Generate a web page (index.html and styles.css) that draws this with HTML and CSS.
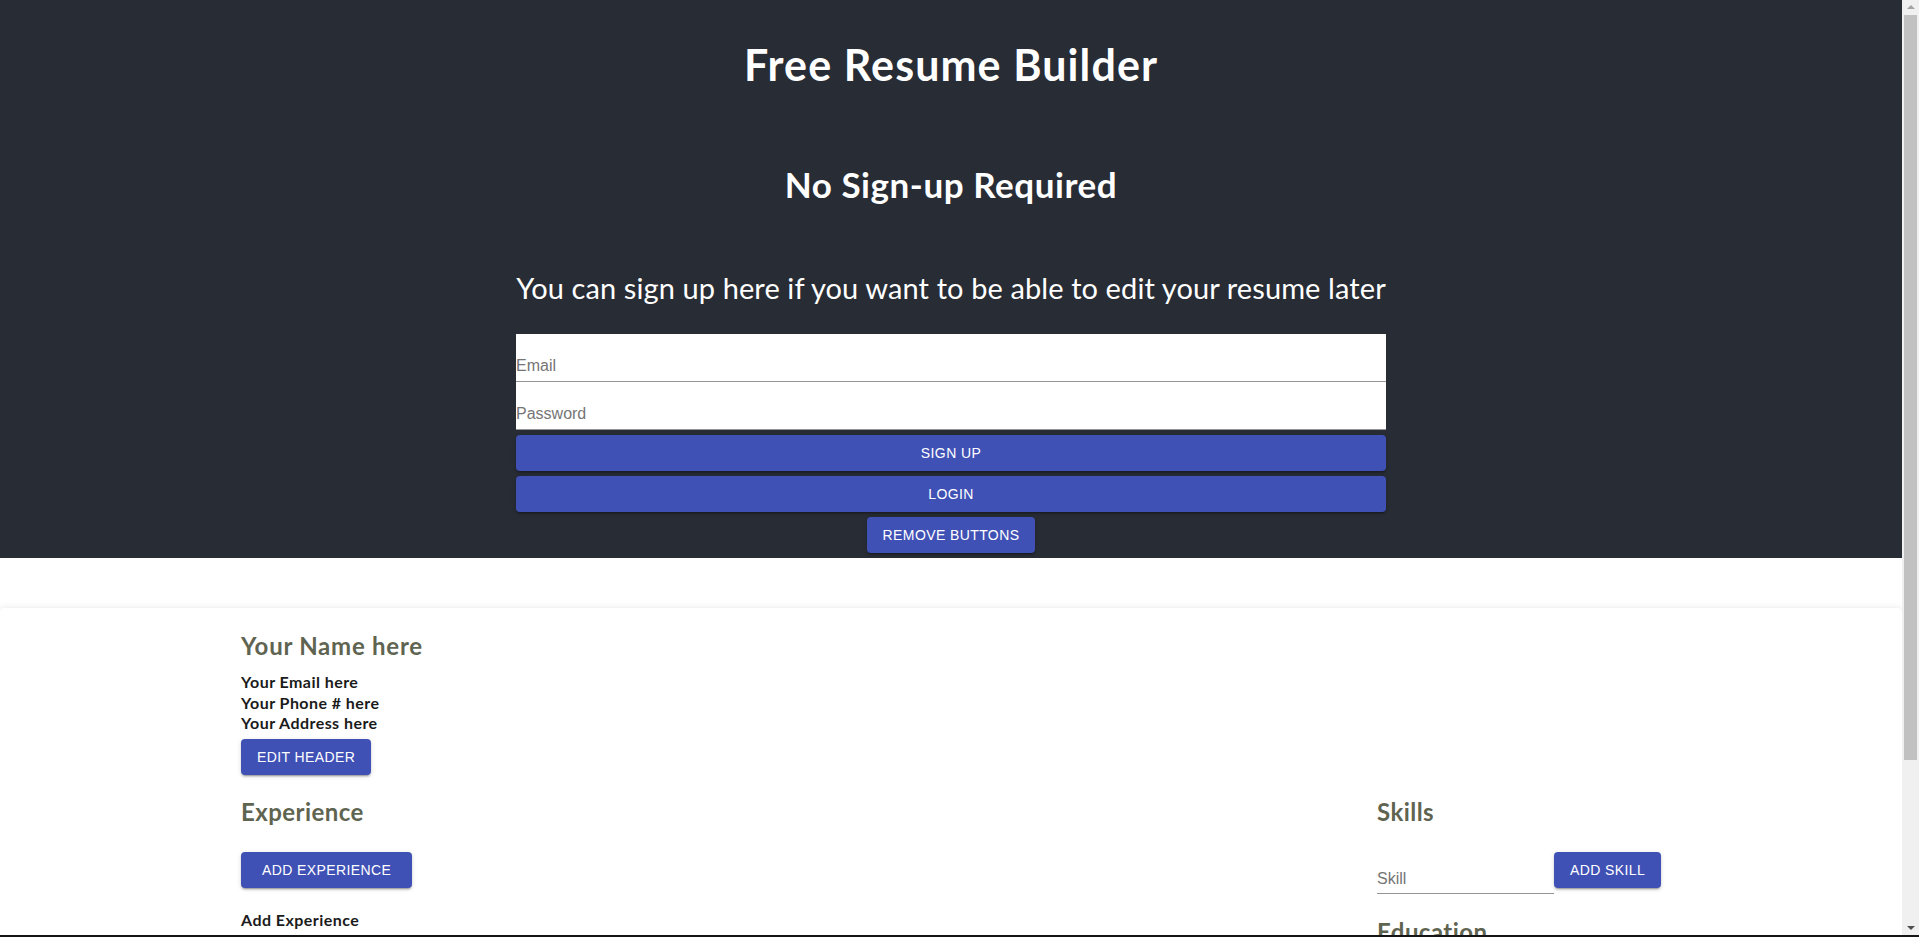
FILE: index.html
```html
<!DOCTYPE html>
<html lang="en">
<head>
<meta charset="utf-8">
<title>Free Resume Builder</title>
<link rel="stylesheet" href="styles.css">
</head>
<body>
<div class="app">
  <header class="hero">
    <h1 class="hero-title">Free Resume Builder</h1>
    <h2 class="hero-sub">No Sign-up Required</h2>
    <div class="auth">
      <p class="auth-lead">You can sign up here if you want to be able to edit your resume later</p>
      <input class="auth-input" type="email" placeholder="Email">
      <input class="auth-input" type="password" placeholder="Password">
      <button class="btn btn-block" type="button">Sign up</button>
      <button class="btn btn-block" type="button">Login</button>
      <button class="btn" type="button">Remove buttons</button>
    </div>
  </header>

  <main class="sheet">
    <div class="sheet-inner">
      <section class="resume-head">
        <h2 class="name">Your Name here</h2>
        <div class="info">
          <div>Your Email here</div>
          <div>Your Phone # here</div>
          <div>Your Address here</div>
        </div>
        <button class="btn btn-edit" type="button">Edit header</button>
      </section>

      <div class="cols">
        <div class="col-main">
          <h2 class="section-title">Experience</h2>
          <button class="btn btn-section btn-wide" type="button">Add experience</button>
          <div class="subhead">Add Experience</div>
          <div class="form-stack">
            <input class="line-input" placeholder="Company">
            <input class="line-input" placeholder="Title">
            <input class="line-input" placeholder="Start Date">
            <input class="line-input" placeholder="End Date">
            <input class="line-input" placeholder="Description">
          </div>
        </div>
        <aside class="col-side">
          <h2 class="section-title">Skills</h2>
          <div class="skill-row">
            <input class="line-input skill-input" placeholder="Skill">
            <button class="btn" type="button">Add skill</button>
          </div>
          <h2 class="section-title edu-title">Education</h2>
          <div class="form-stack">
            <input class="line-input" placeholder="School">
            <input class="line-input" placeholder="Degree">
            <input class="line-input" placeholder="Year">
          </div>
          <button class="btn btn-section" type="button">Add education</button>
        </aside>
      </div>
    </div>
  </main>
</div>

<div class="scrollbar" aria-hidden="true">
  <span class="scroll-arrow scroll-up"></span>
  <span class="scroll-thumb"></span>
  <span class="scroll-arrow scroll-down"></span>
</div>
<div class="screen-edge" aria-hidden="true"></div>
</body>
</html>
```

FILE: styles.css
```css
* {
  box-sizing: border-box;
}

body {
  margin: 0;
  font-family: Lato, "Open Sans", sans-serif;
  background: #fff;
}

.app {
  margin-right: 17px;
}

.hero {
  background: #282c34;
  color: #fff;
  text-align: center;
  padding: 39px 0 5px;
  display: flex;
  flex-direction: column;
  align-items: center;
}

.hero-title {
  margin: 0;
  font-size: 43px;
  line-height: 52px;
  font-weight: 700;
  letter-spacing: 1.1px;
}

.hero-sub {
  margin: 71px 0 0;
  font-size: 35px;
  line-height: 44px;
  font-weight: 700;
  letter-spacing: 0.55px;
}

.auth {
  width: 870px;
  margin-top: 63px;
  display: flex;
  flex-direction: column;
  align-items: center;
}

.auth-lead {
  margin: 0 0 27px;
  font-size: 29px;
  line-height: 38px;
  font-weight: 400;
  letter-spacing: 0.1px;
  white-space: nowrap;
}

.auth-input {
  display: block;
  width: 100%;
  height: 48px;
  border: 0;
  border-bottom: 1px solid #949494;
  padding: 21px 0 5px;
  font: 16px "Liberation Sans", Arial, sans-serif;
  background: #fff;
  color: #222;
  outline: none;
}

.auth-input::placeholder,
.line-input::placeholder {
  color: #757575;
}

.btn {
  display: inline-flex;
  align-items: center;
  justify-content: center;
  height: 36px;
  padding: 0 16px;
  border: 0;
  border-radius: 4px;
  background: #3f51b5;
  color: #fff;
  font: 14px/1 "Liberation Sans", Arial, sans-serif;
  letter-spacing: 0.4px;
  text-transform: uppercase;
  white-space: nowrap;
  cursor: pointer;
  box-shadow: 0 3px 1px -2px rgba(0, 0, 0, 0.2), 0 2px 2px 0 rgba(0, 0, 0, 0.14), 0 1px 5px 0 rgba(0, 0, 0, 0.12);
}

.auth .btn {
  margin-top: 5px;
}

.btn-block {
  width: 100%;
}

.btn-wide {
  padding: 0 21px;
}

.sheet {
  margin-top: 50px;
  background: #fff;
  border-radius: 4px;
  padding: 22px 0 60px;
  box-shadow: 0 3px 3px -2px rgba(0, 0, 0, 0.2), 0 3px 4px 0 rgba(0, 0, 0, 0.14), 0 1px 8px 0 rgba(0, 0, 0, 0.12);
}

.sheet-inner {
  max-width: 1420px;
  margin: 0 auto;
}

.name,
.section-title {
  margin: 0;
  font-size: 24px;
  line-height: 32px;
  font-weight: 700;
  letter-spacing: 0.45px;
  color: #5f6451;
}

.name {
  letter-spacing: 0.75px;
}

.info {
  margin-top: 10px;
  font-size: 16px;
  line-height: 20.7px;
  font-weight: 700;
  letter-spacing: 0.45px;
  color: #1b1b1b;
}

.btn-edit {
  margin-top: 5px;
}

.cols {
  display: flex;
  margin-top: 21px;
}

.col-main {
  flex: 0 0 80%;
}

.col-side {
  flex: 0 0 20%;
}

.btn-section {
  margin-top: 24px;
}

.subhead {
  margin-top: 21px;
  font-size: 16px;
  line-height: 21px;
  font-weight: 700;
  letter-spacing: 0.45px;
  color: #1b1b1b;
}

.form-stack {
  display: flex;
  flex-direction: column;
  gap: 8px;
  width: 300px;
  margin-top: 8px;
}

.line-input {
  display: block;
  height: 42px;
  border: 0;
  border-bottom: 1px solid #949494;
  padding: 17px 0 5px;
  font: 16px "Liberation Sans", Arial, sans-serif;
  background: transparent;
  color: #222;
  outline: none;
}

.skill-row {
  display: flex;
  align-items: flex-start;
  margin-top: 24px;
}

.skill-input {
  width: 177px;
}

.edu-title {
  margin-top: 22px;
}

/* window chrome: classic scrollbar and screen edge */
.scrollbar {
  position: fixed;
  top: 0;
  right: 0;
  width: 17px;
  height: 100vh;
  background: #f0f0f0;
}

.scroll-thumb {
  position: absolute;
  left: 2px;
  right: 2px;
  top: 15px;
  height: 745px;
  background: #c1c1c1;
}

.scroll-arrow {
  position: absolute;
  left: 5px;
  width: 0;
  height: 0;
  border-left: 4px solid transparent;
  border-right: 4px solid transparent;
}

.scroll-up {
  top: 5px;
  border-bottom: 4px solid #a3a3a3;
}

.scroll-down {
  bottom: 7px;
  border-top: 4px solid #505050;
}

.screen-edge {
  position: fixed;
  left: 0;
  right: 0;
  bottom: 0;
  height: 2px;
  background: #151515;
}
```
